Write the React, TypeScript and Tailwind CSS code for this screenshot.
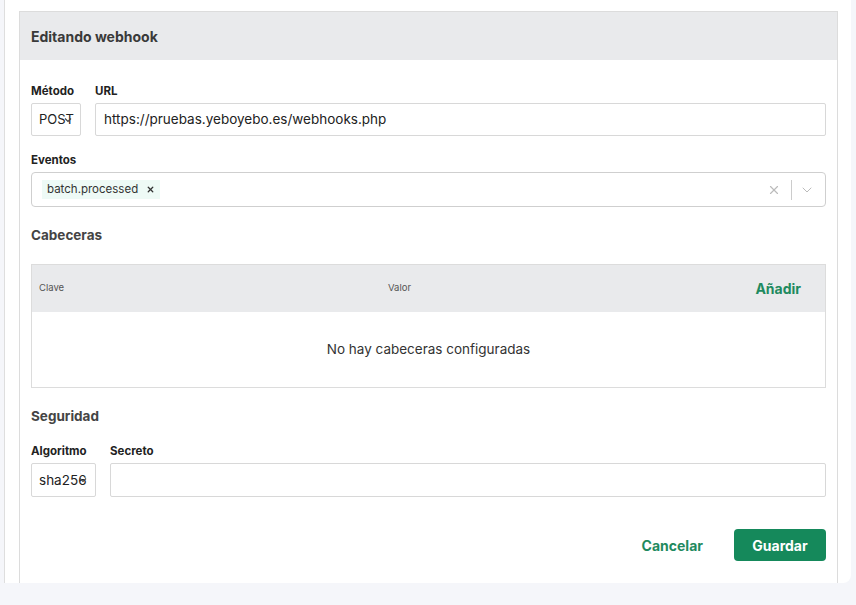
import { X, ChevronDown } from 'lucide-react';

function Caret() {
  return (
    <svg
      width="8"
      height="6"
      viewBox="0 0 8 6"
      className="absolute right-[8px] top-1/2 -translate-y-1/2"
    >
      <path d="M1 1.5 L4 4.5 L7 1.5" fill="none" stroke="#444" strokeWidth="1.2" />
    </svg>
  );
}

export default function App() {
  return (
    <div
      className="w-[856px] h-[605px] bg-[#f5f6fa] text-[#333] overflow-hidden"
      style={{ fontFamily: 'Inter, "Noto Sans", sans-serif' }}
    >
      <div className="ml-[4px] w-[847px] h-[583px] bg-white border-l border-[#dedede] rounded-br-[8px] pt-[11px] pl-[14px] pr-[13px]">
        <div className="h-full border border-b-0 border-[#dcdcdc]">
          {/* header */}
          <div className="h-[48px] bg-[#e9eaec] flex items-center px-[11px]">
            <h2 className="text-[14px] font-bold text-[#3a3a3a]">Editando webhook</h2>
          </div>

          <div className="px-[11px] pt-[24px]">
            {/* method + url */}
            <div className="flex gap-[14px]">
              <div className="w-[50px] flex flex-col">
                <label className="text-[11.5px] font-bold text-[#222] mb-[5px] h-[14px] leading-[14px]">Método</label>
                <div className="relative h-[33px] border border-[#d8d8d8] rounded-[2px] flex items-center pl-[7px] text-[13px] text-[#222] overflow-hidden">
                  POST
                  <Caret />
                </div>
              </div>
              <div className="flex-1 flex flex-col">
                <label className="text-[11.5px] font-bold text-[#222] mb-[5px] h-[14px] leading-[14px]">URL</label>
                <div className="h-[33px] border border-[#d8d8d8] rounded-[2px] flex items-center px-[8px] text-[13.5px] text-[#222]">
                  https://pruebas.yeboyebo.es/webhooks.php
                </div>
              </div>
            </div>

            {/* eventos */}
            <div className="mt-[17px]">
              <label className="block text-[11.5px] font-bold text-[#222] mb-[5px] h-[14px] leading-[14px]">Eventos</label>
              <div className="h-[35px] border border-[#cfcfcf] rounded-[4px] flex items-center pl-[10px] pr-[10px]">
                <div className="flex-1 flex">
                  <span className="flex items-center gap-[8px] bg-[#eefaf6] h-[19px] px-[5px] text-[11.5px] text-[#333]">
                    batch.processed
                    <X size={9} strokeWidth={3.5} className="text-[#333]" />
                  </span>
                </div>
                <X size={14} strokeWidth={2} className="text-[#bbb] mr-[10px]" />
                <div className="w-px h-[20px] bg-[#ccc]" />
                <ChevronDown size={16} strokeWidth={1.5} className="text-[#bbb] ml-[7px]" />
              </div>
            </div>

            {/* cabeceras */}
            <h3 className="mt-[20px] text-[13.5px] font-bold text-[#444] h-[17px] leading-[17px]">Cabeceras</h3>
            <div className="mt-[20px] border border-[#dcdcdc]">
              <div className="h-[47px] bg-[#e9eaec] flex items-center pl-[7px] pr-[24px] text-[9.5px] text-[#555]">
                <div className="w-[349px]">Clave</div>
                <div className="flex-1">Valor</div>
                <button className="text-[14px] font-bold text-[#1f8a60]">Añadir</button>
              </div>
              <div className="h-[75px] flex items-center justify-center text-[13.5px] text-[#333]">
                No hay cabeceras configuradas
              </div>
            </div>

            {/* seguridad */}
            <h3 className="mt-[20px] text-[13.5px] font-bold text-[#444] h-[17px] leading-[17px]">Seguridad</h3>
            <div className="mt-[19px] flex gap-[14px]">
              <div className="w-[65px] flex flex-col">
                <label className="text-[11.5px] font-bold text-[#222] mb-[5px] h-[14px] leading-[14px]">Algoritmo</label>
                <div className="relative h-[34px] border border-[#d8d8d8] rounded-[2px] flex items-center pl-[7px] text-[13.5px] text-[#222] overflow-hidden">
                  sha256
                  <Caret />
                </div>
              </div>
              <div className="flex-1 flex flex-col">
                <label className="text-[11.5px] font-bold text-[#222] mb-[5px] h-[14px] leading-[14px]">Secreto</label>
                <div className="h-[34px] border border-[#d8d8d8] rounded-[2px]" />
              </div>
            </div>

            {/* actions */}
            <div className="mt-[32px] flex justify-end items-center gap-[31px]">
              <button className="text-[14px] font-bold text-[#1f8a60]">Cancelar</button>
              <button className="h-[32px] w-[92px] rounded-[4px] bg-[#15895b] text-white text-[14px] font-bold">
                Guardar
              </button>
            </div>
          </div>
        </div>
      </div>
    </div>
  );
}
